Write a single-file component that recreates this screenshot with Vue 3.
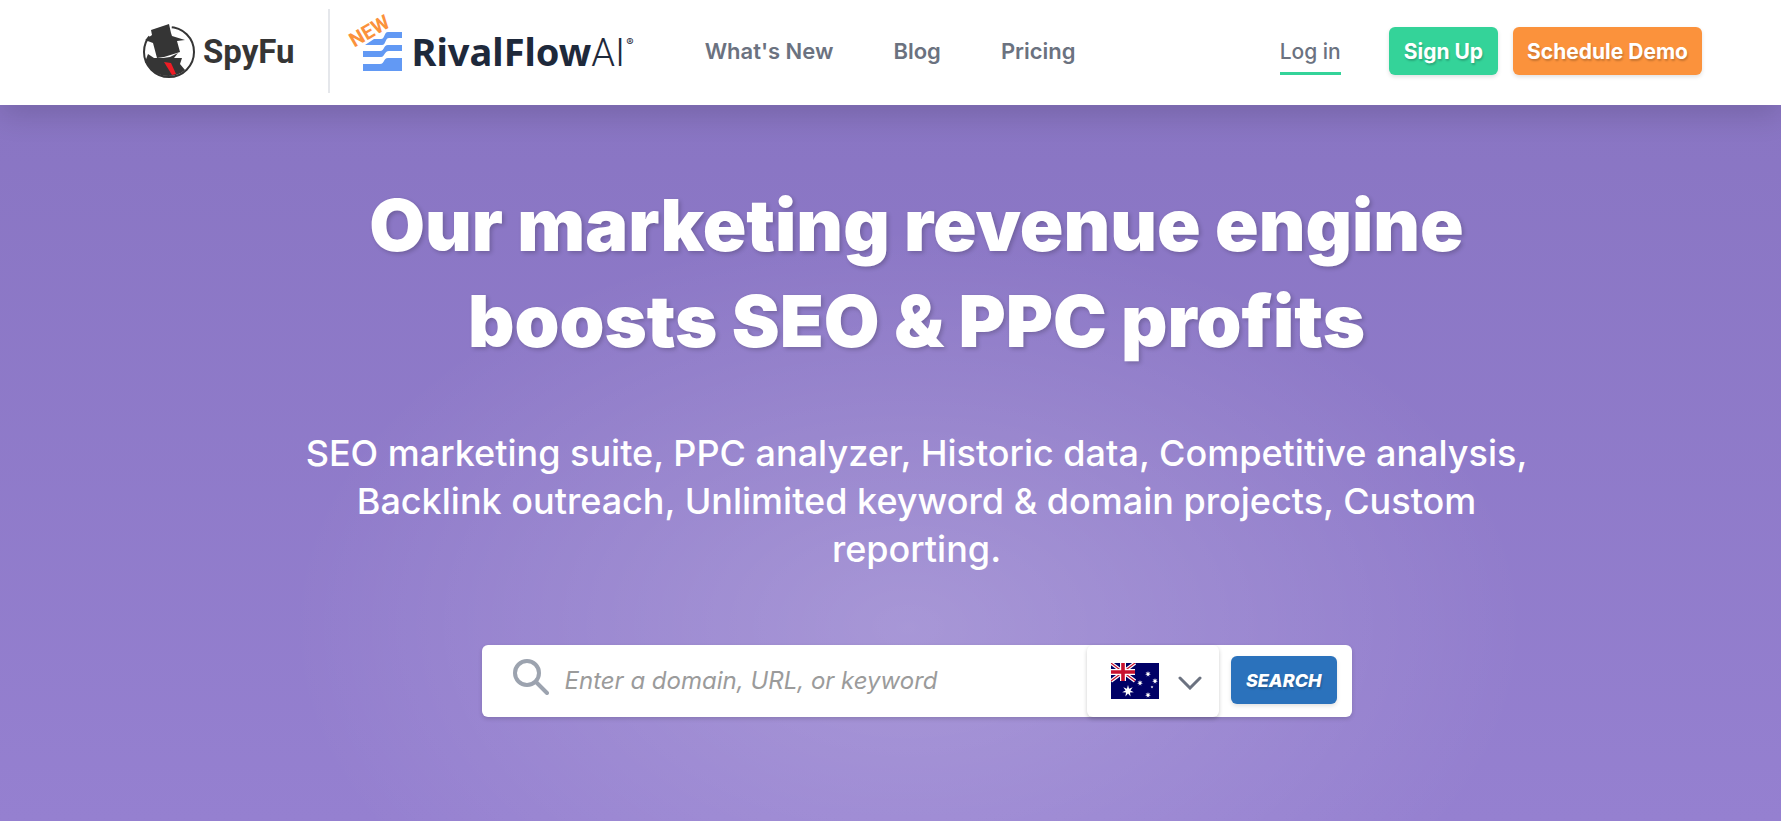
<template>
  <header class="topbar">
    <div class="brands">
      <a href="#" class="spyfu" aria-label="SpyFu home">
        <svg class="spy" viewBox="0 0 52 54" aria-hidden="true">
          <circle cx="26" cy="28" r="25" fill="#fff" stroke="#353535" stroke-width="2" />
          <path fill="#fff" d="M4 10 8 5 26-1l3 2-1 9-20 4z" />
          <path fill="#353535" d="M8 6 26 0l2 9 1 3 13 4-8 1 3 11-16 5-7 1-4-15-8-3 7-5z" />
          <path fill="#353535" d="m5 30 6 4h9l7-1 8-4-4 5 8 0-2 6 5 6c-9 8-24 8-33 0L2 38z" />
          <path fill="#ee1c25" d="m21 38 7 1 5 11-4 1z" />
        </svg>
        <span class="spyfu-name">SpyFu</span>
      </a>
      <a href="#" class="rival">
        <span class="new">NEW</span>
        <svg class="flow" viewBox="0 0 39 39" aria-hidden="true">
          <g fill="#6299f4">
            <path d="M2 13 11 7h7c4 0 3-7 7-7h14v6H26c-4 0-3 7-7 7z" />
            <path d="M0 19h17c5 0 3-6 8-6h14v6H26c-5 0-4 6-8 6H0z" />
            <path d="M0 32h17c5 0 3-6 8-6h14v13H0z" />
          </g>
        </svg>
        <span class="rival-name">RivalFlow<span class="ai">AI</span></span>
        <span class="reg">®</span>
      </a>
    </div>
    <nav class="links">
      <a v-for="link in links" :key="link" href="#">{{ link }}</a>
    </nav>
    <div class="account">
      <a href="#" class="login">Log in</a>
      <button type="button" class="btn signup">Sign Up</button>
      <button type="button" class="btn demo">Schedule Demo</button>
    </div>
  </header>

  <main class="hero">
    <h1>Our marketing revenue engine<br>boosts SEO &amp; PPC profits</h1>
    <p>
      SEO marketing suite, PPC analyzer, Historic data, Competitive analysis,
      Backlink outreach, Unlimited keyword &amp; domain projects, Custom reporting.
    </p>
    <form class="search" @submit.prevent>
      <label for="query" class="search-icon" aria-label="Search">
        <svg viewBox="0 0 36 36" fill="none" stroke="currentColor" stroke-width="4" stroke-linecap="round">
          <circle cx="14" cy="14" r="12" />
          <path d="m23 23 11 11" />
        </svg>
      </label>
      <input id="query" v-model="query" type="text" placeholder="Enter a domain, URL, or keyword">
      <button type="button" class="country" aria-label="Country: Australia">
        <svg class="flag" viewBox="0 0 48 36" aria-hidden="true">
          <path fill="#006" d="M0 0h48v36H0z" />
          <path stroke="#fff" stroke-width="3.5" d="m0 0 24 18M24 0 0 18" />
          <path stroke="#c8102e" stroke-width="1.2" d="m0 0 24 18M24 0 0 18" />
          <path stroke="#fff" stroke-width="6" d="M12 0v18M0 9h24" />
          <path stroke="#c8102e" stroke-width="3.6" d="M12 0v18M0 9h24" />
          <polygon v-for="(s, i) in stars" :key="i" fill="#fff" :points="starPoints(s)" />
        </svg>
        <svg class="chevron" viewBox="0 0 24 14" fill="none" stroke="currentColor" stroke-width="3" stroke-linecap="round" aria-hidden="true">
          <path d="m2 2 10 10L22 2" />
        </svg>
      </button>
      <button type="submit" class="btn go">SEARCH</button>
    </form>
  </main>
</template>

<script setup>
import { ref } from 'vue'

const query = ref('')
const links = ["What's New", 'Blog', 'Pricing']

const stars = [
  { x: 17, y: 28, r: 6, n: 7 },
  { x: 29, y: 20, r: 3, n: 7 },
  { x: 37, y: 11, r: 3, n: 7 },
  { x: 44, y: 18, r: 3, n: 7 },
  { x: 41, y: 24, r: 1.5, n: 5 },
  { x: 37, y: 32, r: 3, n: 7 }
]

function starPoints({ x, y, r, n }) {
  return Array.from({ length: n * 2 }, (_, i) => {
    const a = (Math.PI * i) / n - Math.PI / 2
    const d = i % 2 ? r * 0.42 : r
    return `${x + d * Math.cos(a)},${y + d * Math.sin(a)}`
  }).join(' ')
}
</script>

<style>
body {
  font-family: Inter, sans-serif;
  background: #9580ce;
}

#app {
  min-height: 100vh;
  display: flex;
  flex-direction: column;
}
</style>

<style scoped>
a {
  color: inherit;
  text-decoration: none;
}

button {
  font-family: inherit;
  border: none;
  cursor: pointer;
}

.topbar {
  position: relative;
  z-index: 1;
  display: flex;
  align-items: center;
  height: 105px;
  box-sizing: border-box;
  padding: 0 79px 3px 143px;
  background: #fff;
  color: #6b7280;
  box-shadow: 0 10px 28px rgba(0, 0, 0, 0.14);
}

.brands {
  display: flex;
  align-items: center;
}

.spyfu {
  display: flex;
  align-items: center;
  gap: 8px;
  height: 84px;
  padding-right: 33px;
  border-right: 2px solid #e5e7eb;
}

.spy {
  width: 52px;
  height: 54px;
  overflow: visible;
}

.spyfu-name {
  color: #353535;
  font: bold 33px Roboto, sans-serif;
}

.rival {
  position: relative;
  display: flex;
  align-items: center;
  padding-left: 33px;
  color: #1e293b;
}

.new {
  position: absolute;
  left: 18px;
  top: -6px;
  color: #fb923c;
  font: bold 20px Roboto, sans-serif;
  transform: rotate(-30deg);
}

.flow {
  width: 39px;
  height: 39px;
}

.rival-name {
  margin-left: 10px;
  font: bold 38px "Noto Sans", sans-serif;
}

.ai {
  font-family: Roboto, sans-serif;
  font-weight: 300;
}

.reg {
  align-self: flex-start;
  margin: 10px 0 0 1px;
  font-size: 11px;
}

.links {
  display: flex;
  gap: 60px;
  margin-left: 71px;
  font-size: 22px;
  font-weight: 600;
}

.account {
  display: flex;
  align-items: center;
  margin-left: auto;
}

.login {
  margin-right: 48px;
  padding: 11px 0 8px;
  border-bottom: 3px solid #34d399;
  font-size: 21px;
  font-weight: 500;
}

.btn {
  height: 48px;
  padding: 0 15px;
  border-radius: 6px;
  color: #fff;
  font-size: 21px;
  font-weight: 700;
  text-shadow: 1px 2px 2px rgba(0, 0, 0, 0.2);
  box-shadow: 0 2px 4px rgba(0, 0, 0, 0.12);
}

.signup {
  margin-right: 15px;
  background: #34d399;
}

.demo {
  padding: 0 14px;
  background: #fb923c;
}

.hero {
  flex: 1;
  display: flex;
  flex-direction: column;
  align-items: center;
  padding: 72px 0 72px 52px;
  background:
    radial-gradient(ellipse 620px 400px at 51% 73%, rgba(255, 255, 255, 0.2), rgba(255, 255, 255, 0)),
    linear-gradient(#8975c3, #9580d0);
  color: #fff;
  text-align: center;
}

h1 {
  margin: 0;
  font-size: 72px;
  line-height: 96px;
  font-weight: 900;
  text-shadow: 2px 2px 4px rgba(0, 0, 0, 0.2);
}

p {
  max-width: 1248px;
  margin: 60px 0 0;
  font-size: 36px;
  line-height: 48px;
  font-weight: 500;
}

.search {
  display: flex;
  width: 100%;
  max-width: 870px;
  height: 72px;
  margin-top: 72px;
  border-radius: 6px;
  background: #fff;
  box-shadow: 0 2px 4px rgba(0, 0, 0, 0.15);
}

.search-icon {
  padding: 14px 16px 0 31px;
  color: #9ca3af;
}

.search-icon svg {
  width: 36px;
  height: 36px;
}

.search input {
  flex: 1;
  min-width: 0;
  padding: 0 0 2px;
  border: none;
  outline: none;
  background: transparent;
  font: italic 24px Inter, sans-serif;
}

.search input::placeholder {
  color: #9b9b9b;
}

.country {
  display: flex;
  align-items: center;
  gap: 19px;
  padding: 0 17px 0 24px;
  border-radius: 6px;
  background: #fff;
  color: #6b7280;
  box-shadow: 0 2px 4px rgba(0, 0, 0, 0.2);
}

.flag {
  width: 48px;
  height: 36px;
}

.chevron {
  width: 24px;
  height: 14px;
  margin-top: 4px;
}

.go {
  margin: 11px 15px 0 12px;
  background: #2b72bc;
  font-size: 18px;
  font-style: italic;
  font-weight: 800;
}
</style>
